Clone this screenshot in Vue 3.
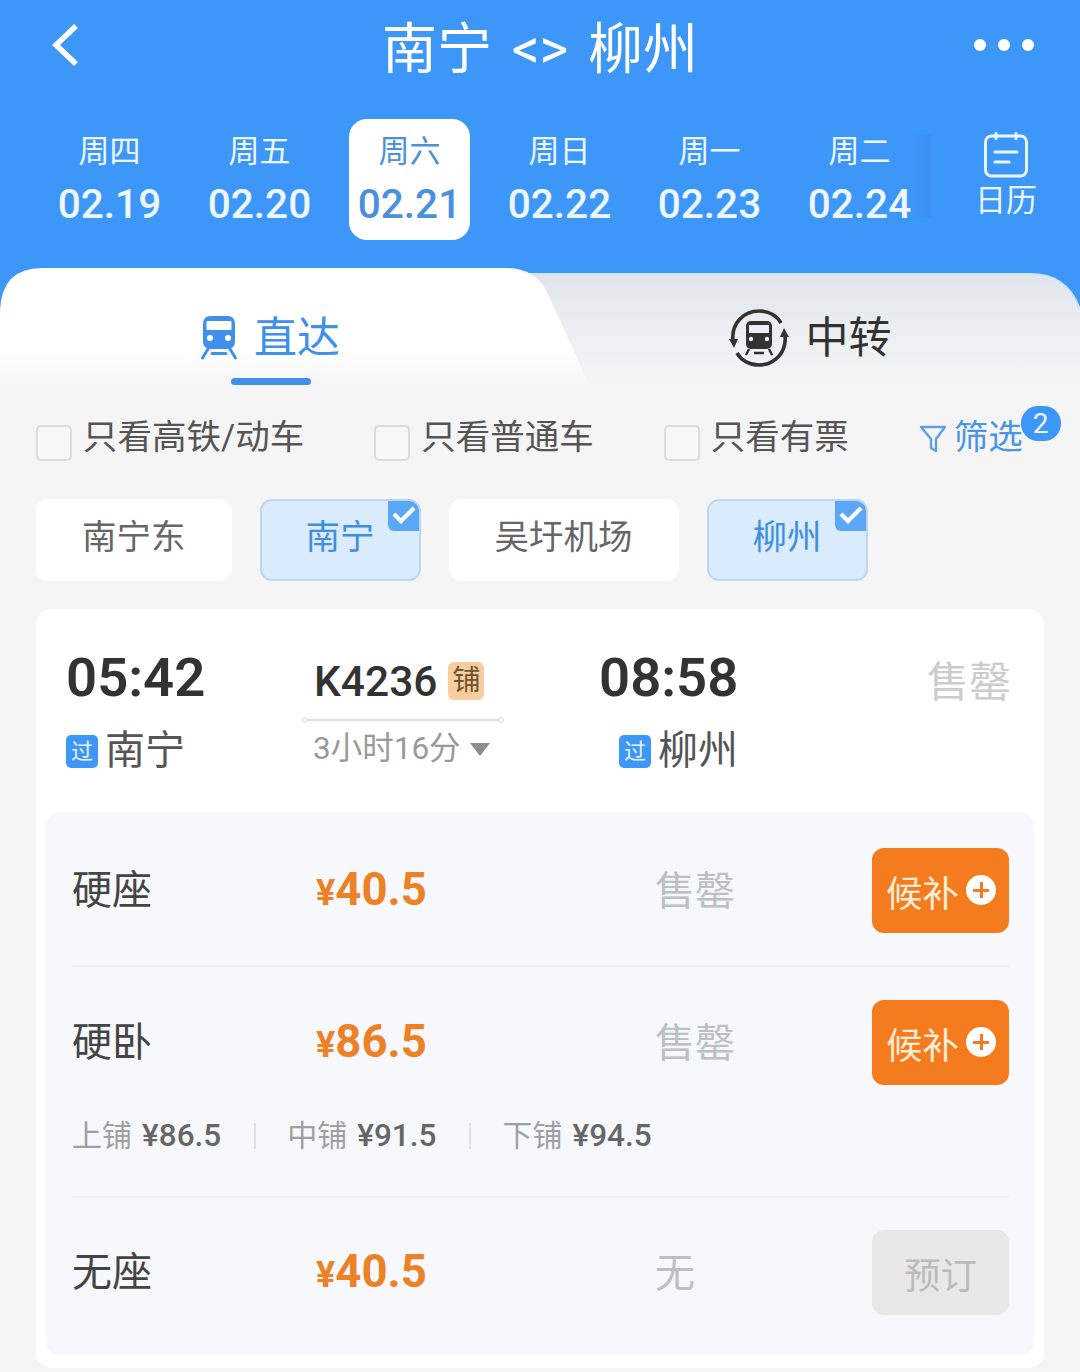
<script setup>
const dates = [
  { w: '周四', d: '02.19' },
  { w: '周五', d: '02.20' },
  { w: '周六', d: '02.21', on: true },
  { w: '周日', d: '02.22' },
  { w: '周一', d: '02.23' },
  { w: '周二', d: '02.24' }
]
const checks = ['只看高铁/动车', '只看普通车', '只看有票']
const chips = [
  { t: '南宁东' },
  { t: '南宁', on: true },
  { t: '吴圩机场' },
  { t: '柳州', on: true }
]
const berths = [
  { n: '上铺', p: '¥86.5' },
  { n: '中铺', p: '¥91.5' },
  { n: '下铺', p: '¥94.5' }
]
</script>

<template>
  <div class="page">
    <header class="head">
      <div class="nav">
        <svg class="back" viewBox="0 0 28 44" width="28" height="44"><path d="M25 3 5 22l20 19" fill="none" stroke="#fff" stroke-width="5.5" /></svg>
        <div class="title">南宁 &lt;&gt; 柳州</div>
        <div class="dots"><i></i><i></i><i></i></div>
      </div>
      <div class="dates">
        <div v-for="x in dates" :key="x.d" class="date">
          <div class="date-box" :class="{ on: x.on }">
            <div class="wk">{{ x.w }}</div>
            <div class="dd">{{ x.d }}</div>
          </div>
        </div>
        <div class="cal">
          <svg viewBox="0 0 46 46" width="46" height="46" fill="none" stroke="#eaf5ff" stroke-width="3" stroke-linecap="round">
            <rect x="2.5" y="4" width="41" height="40" rx="6" />
            <path d="M13 1.5v5M33 1.5v5M12 20h22M12 30h14" />
          </svg>
          <span>日历</span>
        </div>
      </div>
    </header>

    <section class="tabs">
      <svg class="tabs-bg" viewBox="0 0 1080 127" width="1080" height="127">
        <defs>
          <linearGradient id="ga" x1="0" y1="0" x2="0" y2="1">
            <stop offset="0.68" stop-color="#fff" />
            <stop offset="1" stop-color="#f5f5f5" />
          </linearGradient>
          <linearGradient id="gi" x1="0" y1="0" x2="0" y2="1">
            <stop offset="0" stop-color="#e1e5ea" />
            <stop offset="0.45" stop-color="#eceef1" />
            <stop offset="0.95" stop-color="#f5f5f5" />
          </linearGradient>
        </defs>
        <path d="M480 6H1030Q1068 6 1080 42V127H480Z" fill="url(#gi)" />
        <path d="M480 6H1030Q1068 6 1080 42" fill="none" stroke="#cfe6fb" stroke-width="2" />
        <path d="M0 42Q2 0 42 0H505Q534 0 546 22L590 118H0Z" fill="url(#ga)" />
      </svg>
      <div class="tab">
        <div class="tab-row">
          <svg viewBox="0 0 38 44" width="38" height="44">
            <rect x="3" y="0" width="32" height="33" rx="7" fill="#3f90ea" />
            <rect x="6.5" y="5" width="25" height="9" rx="1" fill="#fff" />
            <circle cx="10" cy="22" r="3" fill="#fff" />
            <circle cx="28" cy="22" r="3" fill="#fff" />
            <path d="M8 33 2.5 42M30 33l5.5 9M12 37.5h14" stroke="#3f90ea" stroke-width="3" stroke-linecap="round" fill="none" />
          </svg>
          <span class="tab-label active">直达</span>
        </div>
        <i class="bar"></i>
      </div>
      <div class="tab">
        <div class="tab-row gap2">
          <svg viewBox="0 0 60 60" width="60" height="60">
            <g fill="none" stroke="#333" stroke-width="3.6">
              <path d="M4 33C2 15 15 3 30 3c10 0 18 5 22 12" />
              <path d="M56 27c2 18-11 30-26 30-10 0-18-5-22-12" />
            </g>
            <path d="M0 31h9l-4 9ZM60 29h-9l4-9Z" fill="#333" />
            <rect x="17" y="13" width="26" height="28" rx="5" fill="#333" />
            <rect x="20" y="17" width="20" height="8" fill="#eceef1" />
            <circle cx="22" cy="31" r="2.2" fill="#eceef1" />
            <circle cx="38" cy="31" r="2.2" fill="#eceef1" />
            <path d="M20 41l-3 6M40 41l3 6M25 45h10" stroke="#333" stroke-width="2.4" fill="none" />
          </svg>
          <span class="tab-label">中转</span>
        </div>
      </div>
    </section>

    <section class="filters">
      <label v-for="c in checks" :key="c" class="check"><i class="box"></i><span>{{ c }}</span></label>
      <div class="filter">
        <svg viewBox="0 0 28 30" width="28" height="30" fill="none" stroke="#5f9fe6" stroke-width="2.4" stroke-linejoin="round"><path d="M2 3h24L17 15v12l-5-3v-9Z" /></svg>
        <span>筛选</span>
        <b class="badge">2</b>
      </div>
    </section>

    <section class="chips">
      <div v-for="c in chips" :key="c.t" class="chip" :class="{ on: c.on }">
        {{ c.t }}
        <i v-if="c.on" class="tick">
          <svg viewBox="0 0 30 30" width="30" height="30"><path d="M6 13l7 7L26 7" fill="none" stroke="#fff" stroke-width="4.2" /></svg>
        </i>
      </div>
    </section>

    <section class="card">
      <div class="train">
        <div class="col-from">
          <div class="time">05:42</div>
          <div class="station"><i class="pass">过</i><span>南宁</span></div>
        </div>
        <div class="col-mid">
          <div class="code">K4236<i class="pu">铺</i></div>
          <div class="line"></div>
          <div class="dur">3小时16分<i class="tri"></i></div>
        </div>
        <div class="col-to">
          <div class="time">08:58</div>
          <div class="station end"><i class="pass">过</i><span>柳州</span></div>
        </div>
        <div class="sold-main">售罄</div>
      </div>

      <div class="panel">
        <div class="seat">
          <div class="seat-row">
            <span class="seat-name">硬座</span>
            <span class="price"><small>¥</small>40.5</span>
            <span class="stock">售罄</span>
            <button class="btn">候补<i class="plus"></i></button>
          </div>
        </div>
        <div class="seat">
          <div class="seat-row">
            <span class="seat-name">硬卧</span>
            <span class="price"><small>¥</small>86.5</span>
            <span class="stock">售罄</span>
            <button class="btn">候补<i class="plus"></i></button>
          </div>
          <div class="berths">
            <div v-for="b in berths" :key="b.n" class="berth"><span>{{ b.n }}</span><b>{{ b.p }}</b></div>
          </div>
        </div>
        <div class="seat last">
          <div class="seat-row">
            <span class="seat-name">无座</span>
            <span class="price"><small>¥</small>40.5</span>
            <span class="stock">无</span>
            <button class="btn off">预订</button>
          </div>
        </div>
      </div>
    </section>
  </div>
</template>

<style>
html, body { margin: 0; background: #f5f5f5; }
</style>

<style scoped>
.page {
  width: 1080px;
  height: 1372px;
  overflow: hidden;
  background: #f5f5f5;
  font-family: Roboto, "Noto Sans CJK SC", sans-serif;
  color: #333;
}
i { display: block; font-style: normal; }

.head { height: 268px; background: #3d97f8; }
.nav { height: 96px; position: relative; display: flex; align-items: center; justify-content: center; }
.back { position: absolute; left: 51px; top: 23px; }
.title { color: #fff; font-size: 55px; line-height: 96px; word-spacing: 6px; padding-top: 1px; }
.dots { position: absolute; left: 974px; top: 39px; display: flex; gap: 12px; }
.dots i { width: 12px; height: 12px; border-radius: 50%; background: #fff; }

.dates { display: flex; margin-top: 23px; padding-left: 34.5px; }
.date { width: 150px; display: flex; justify-content: center; }
.date-box { width: 121px; height: 121px; border-radius: 18px; display: flex; flex-direction: column; align-items: center; justify-content: center; gap: 6px; color: #eef7ff; }
.date-box.on { background: #fff; color: #4a90dc; }
.wk { font-size: 31px; line-height: 40px; }
.dd { font-size: 40.5px; line-height: 48px; font-weight: 500; padding-top: 2px; }
.cal { position: relative; width: 145px; display: flex; flex-direction: column; align-items: center; margin-top: 13px; height: 88px; color: #eaf5ff; font-size: 31px; line-height: 40px; gap: 3px; }
.cal::before { content: ""; position: absolute; left: -22px; top: 2px; width: 18px; height: 84px; background: linear-gradient(90deg, rgba(50, 125, 215, 0), rgba(50, 125, 215, .28)); }
.cal svg { flex: none; margin-right: 3px; }
.cal span { margin-right: 2px; }

.tabs { position: relative; height: 127px; display: grid; grid-template-columns: 540px 540px; background: linear-gradient(#3d97f8 50px, #f5f5f5 50px); }
.tabs-bg { position: absolute; left: 0; top: 0; }
.tab { position: relative; padding-top: 45px; display: flex; flex-direction: column; align-items: center; }
.tab-row { height: 50px; display: flex; align-items: center; gap: 16px; }
.tab-row.gap2 { gap: 17px; }
.tab-label { font-size: 43px; line-height: 50px; color: #333; }
.tab-label.active { color: #3f90ea; }
.bar { width: 80px; height: 7px; border-radius: 4px; background: #3f90ea; margin-top: 15px; margin-left: 1px; }

.filters { display: flex; gap: 70px; margin-top: 20px; padding-left: 36px; height: 45px; position: relative; }
.check { display: flex; align-items: flex-start; gap: 11px; font-size: 34.5px; line-height: 44px; color: #555; }
.box { width: 32px; height: 32px; margin-top: 10px; border: 2px solid #dcdcdc; border-radius: 5px; background: #f7f7f7; }
.filter { display: flex; align-items: flex-start; gap: 7px; color: #4a95e4; font-size: 34.5px; line-height: 44px; position: relative; }
.filter svg { margin-top: 9px; }
.badge { position: absolute; left: 102px; top: -9px; width: 40px; height: 35px; border-radius: 17px; background: #3d97f8; color: #eef7ff; font-size: 28px; line-height: 35px; font-weight: 400; text-align: center; }

.chips { display: flex; gap: 28px; margin-top: 39px; padding-left: 36px; }
.chip { position: relative; box-sizing: border-box; height: 82px; padding: 0 46px; border-radius: 12px; background: #fff; color: #666; font-size: 34.5px; line-height: 76px; }
.chip.on { background: #d9ebfc; border: 2px solid #bcd6f0; padding: 0 44px; color: #3d8fe0; line-height: 72px; }
.tick { position: absolute; right: 0; top: 0; width: 31px; height: 30px; background: #5aa6f7; border-radius: 0 10px 0 6px; }
.tick svg { display: block; }

.card { margin: 28px 36px 0; height: 759px; background: #fff; border-radius: 16px; padding: 0 10px; }
.train { height: 203px; position: relative; display: flex; padding-left: 20px; }
.col-from { width: 237px; padding-top: 38px; box-sizing: border-box; }
.col-mid { width: 200px; padding-top: 51px; box-sizing: border-box; margin-right: 96px; }
.col-to { width: 139px; padding-top: 38px; box-sizing: border-box; }
.time { font-size: 54.5px; line-height: 60px; font-weight: 600; color: #333; }
.station { display: flex; align-items: center; gap: 7px; margin-top: 19px; height: 50px; font-size: 40px; color: #555; }
.station span { line-height: 50px; margin-top: -1px; }
.station.end { justify-content: flex-end; white-space: nowrap; }
.pass { width: 32px; height: 33px; border-radius: 5px; background: #3d97f8; color: #e8f3ff; font-size: 22px; line-height: 33px; text-align: center; flex: none; }
.code { display: flex; align-items: center; height: 42px; padding-left: 11px; font-size: 42.5px; font-weight: 500; color: #333; gap: 11px; }
.pu { width: 36px; height: 38px; border-radius: 6px; background: #f8cda0; color: #6f5234; font-size: 28px; line-height: 38px; text-align: center; font-weight: 400; }
.line { height: 2px; background: #e0e0e0; margin-top: 17px; position: relative; border-radius: 1px; }
.line::before, .line::after { content: ""; position: absolute; top: -2px; width: 6px; height: 6px; border-radius: 50%; background: #fff; box-sizing: border-box; border: 1px solid #d8d8d8; }
.line::before { left: -1px; }
.line::after { right: -1px; }
.dur { display: flex; align-items: center; gap: 9px; padding-left: 10px; font-size: 31.5px; line-height: 40px; color: #999; margin-top: 8px; white-space: nowrap; }
.tri { width: 0; height: 0; border-left: 10.5px solid transparent; border-right: 10.5px solid transparent; border-top: 13px solid #8c8c8c; margin-top: 1px; }
.sold-main { position: absolute; right: 23px; top: 46px; font-size: 42px; line-height: 56px; color: #ccc; }

.panel { height: 543px; background: #f6f8fb; border-radius: 14px; padding: 0 25px 0 26px; box-sizing: border-box; }
.seat { border-bottom: 2px solid #edf0f4; padding: 36px 0 32px; }
.seat + .seat { padding-top: 33px; }
.seat:nth-child(2) { padding-bottom: 40px; }
.seat.last { border-bottom: 0; padding-top: 32px; }
.seat-row { display: flex; align-items: center; height: 85px; }
.seat-name { width: 244px; font-size: 40px; line-height: 54px; color: #444; }
.price { width: 339px; font-size: 45.5px; line-height: 54px; font-weight: 700; color: #ec8128; padding-top: 2px; }
.price small { font-size: 36px; margin-right: 0; }
.stock { flex: 1; font-size: 40px; line-height: 54px; color: #bcc0c6; padding-top: 2px; }
.btn { position: relative; box-sizing: border-box; width: 137px; height: 85px; border: 0; border-radius: 12px; background: #f57b1f; color: #ffeed6; font-family: inherit; font-size: 36.5px; line-height: 76px; text-align: left; padding: 9px 0 0 14px; }
.btn.off { background: #e8e8e8; color: #bbb; text-align: center; padding-left: 0; }
.plus { position: absolute; left: 94px; top: 27px; width: 30px; height: 30px; border-radius: 50%; background: #fff; }
.plus::before, .plus::after { content: ""; position: absolute; background: #f57b1f; }
.plus::before { left: 7px; top: 13.5px; width: 16px; height: 3px; }
.plus::after { left: 13.5px; top: 7px; width: 3px; height: 16px; }

.berths { display: flex; height: 40px; margin-top: 31px; }
.berth { display: flex; align-items: center; gap: 10px; font-size: 30px; line-height: 40px; padding-right: 35px; margin-right: 31px; position: relative; color: #a0a0a0; }
.berth b { font-weight: 500; font-size: 31.5px; color: #666; }
.berth:not(:last-child)::after { content: ""; position: absolute; right: 0; top: 7px; width: 2px; height: 26px; background: #dfe1e4; }
</style>
